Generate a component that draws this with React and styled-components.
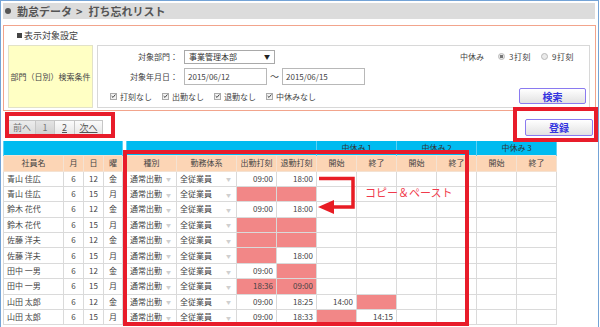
import React from 'react';
import styled, { createGlobalStyle } from 'styled-components';

const GlobalStyle = createGlobalStyle`
  html, body { margin: 0; padding: 0; background: #fff; }
  body {
    width: 600px; height: 327px; overflow: hidden;
    font-family: "Noto Sans CJK JP", "Noto Sans", sans-serif;
    color: #444;
  }
  * { box-sizing: border-box; }
`;

const Page = styled.div`
  position: relative;
  width: 599px;
  height: 327px;
  border: 1px solid #74a3d6;
  border-bottom: none;
  padding: 2px 2px 0 2px;
  overflow: hidden;
`;

const TitleBar = styled.div`
  display: flex;
  align-items: center;
  height: 16px;
  margin-right: 1px;
  padding-left: 2px;
  background: #dcdcdc;
  color: #555;
  font-size: 11px;
  font-weight: bold;
  white-space: pre;
`;

const Bullet = styled.span`
  width: 6px;
  height: 6px;
  border-radius: 50%;
  background: #555;
  margin-right: 6px;
`;

const Crumb = styled.span`
  margin: 0 6px 0 4px;
`;

const SearchPanel = styled.div`
  margin-top: 6px;
  height: 86px;
  border: 1px solid #f2a48c;
  padding: 0 5px 0 4px;
`;

const PanelHeading = styled.div`
  display: flex;
  align-items: center;
  height: 19px;
  padding-left: 9px;
  font-size: 9px;
  color: #444;
`;

const Square = styled.span`
  width: 5px;
  height: 5px;
  background: #444;
  margin-right: 2px;
`;

const ConditionBox = styled.div`
  display: flex;
  gap: 4px;
  height: 63px;
`;

const ConditionLabel = styled.div`
  width: 85px;
  display: flex;
  align-items: center;
  justify-content: center;
  background: #ffffc4;
  border: 1px solid #e2e2c8;
  font-size: 8px;
  color: #444;
`;

const ConditionFields = styled.div`
  flex: 1;
  border: 1px solid #d8d8d8;
  padding: 3px 3px 2px 0;
  display: flex;
  flex-direction: column;
`;

const FieldRow = styled.div`
  display: flex;
  align-items: center;
  height: ${p => p.$h}px;
  margin-top: ${p => p.$mt || 0}px;
  padding-left: ${p => p.$pl || 0}px;
  font-size: 8px;
`;

const FieldLabel = styled.div`
  width: 80px;
  text-align: right;
  margin-right: 6px;
  color: #444;
`;

const SelectBox = styled.div`
  width: 91px;
  height: 14px;
  border: 1px solid #a9a9a9;
  background: #fff;
  display: flex;
  align-items: center;
  justify-content: space-between;
  padding: 0 4px 0 4px;
  color: #333;
`;

const SelectCaret = styled.span`
  font-size: 6px;
  color: #222;
`;

const DateInput = styled.div`
  width: 83px;
  height: 17px;
  border: 1px solid #b8b8b8;
  display: flex;
  align-items: center;
  padding-left: 3px;
  font-size: 8px;
  color: #444;
`;

const Tilde = styled.span`
  margin: 0 3px 0 3px;
  font-size: 9px;
`;

const RadioGroup = styled.div`
  margin-left: auto;
  margin-right: 12px;
  display: flex;
  align-items: center;
  color: #444;
`;

const RadioTitle = styled.span`
  margin-right: 14px;
`;

const Radio = styled.span`
  width: 7px;
  height: 7px;
  border-radius: 50%;
  border: 1px solid #b8b8b8;
  background: ${p => (p.$on ? 'radial-gradient(circle, #777 0 1.6px, #e8e8e8 2px)' : '#eaeaea')};
  margin-right: 4px;
`;

const RadioText = styled.span`
  margin-right: ${p => p.$mr || 0}px;
  letter-spacing: 0.5px;
`;

const CheckItem = styled.span`
  display: flex;
  align-items: center;
  margin-right: 10px;
  color: #444;
`;

const CheckBox = styled.span`
  width: 7px;
  height: 7px;
  border: 1px solid #aaa;
  background: #f1f1f1;
  margin-right: 3px;
  display: flex;
  align-items: center;
  justify-content: center;
`;

const ActionButton = styled.button`
  margin-left: auto;
  margin-right: ${p => p.$mr}px;
  width: ${p => p.$w}px;
  height: ${p => p.$h}px;
  border: 1px solid #8a7af0;
  border-radius: 2px;
  background: linear-gradient(#ffffff, #e2e2e2);
  color: #3535e0;
  font-family: "Noto Sans CJK JP", sans-serif;
  font-size: 10px;
  font-weight: bold;
  padding: 0;
  display: flex;
  align-items: center;
  justify-content: center;
`;

const ToolRow = styled.div`
  display: flex;
  align-items: center;
  height: 17px;
  margin: 8px 0 5px 0;
  padding-left: 5px;
`;

const Pager = styled.div`
  display: flex;
  height: 16px;
`;

const PageBtn = styled.span`
  width: ${p => p.$w}px;
  height: 16px;
  display: flex;
  align-items: center;
  justify-content: center;
  border: 1px solid #c6c6c6;
  margin-left: -1px;
  font-size: 9px;
  color: ${p => (p.$link ? '#555' : '#777')};
  text-decoration: ${p => (p.$link ? 'underline' : 'none')};
  background: ${p =>
    p.$current ? 'linear-gradient(#e4e4e4, #cfcfcf)' : p.$link ? 'linear-gradient(#fbfbfb, #e6e6e6)' : 'linear-gradient(#ececec, #dadada)'};
  &:first-child { margin-left: 0; }
`;

const Tables = styled.div`
  display: flex;
  gap: 3px;
`;

const Grid = styled.table`
  border-collapse: collapse;
  table-layout: fixed;
  width: ${p => p.$w}px;
  font-size: 8px;
  line-height: 1;
`;

const BlueRow = styled.tr`
  height: 14px;
`;

const BlueCell = styled.th`
  background: #00bbf0;
  border-left: 1px solid #5cd0f5;
  border-right: 1px solid #5cd0f5;
  font-weight: normal;
  color: #333;
  padding: 0;
  vertical-align: middle;
`;

const HeadRow = styled.tr`
  height: 16px;
`;

const HeadCell = styled.th`
  background: #fcd5b5;
  border: 1px solid #f4e2d2;
  font-weight: normal;
  color: #444;
  padding: 0;
  text-align: center;
  vertical-align: middle;
`;

const DataRow = styled.tr`
  height: 15.4px;
`;

const Cell = styled.td`
  border: 1px solid #dadada;
  padding: 0 ${p => (p.$align === 'right' ? 3 : 0)}px 0 ${p => (p.$align === 'left' ? 3 : 0)}px;
  text-align: ${p => p.$align || 'center'};
  vertical-align: middle;
  background: ${p => (p.$pink ? '#f28787' : '#fff')};
  color: #444;
  white-space: nowrap;
  overflow: hidden;
`;

const Combo = styled.span`
  display: flex;
  justify-content: space-between;
  align-items: center;
  padding-right: 5px;
`;

const ComboCaret = styled.span`
  font-size: 5px;
  color: #cfcfcf;
`;

const RedBox = styled.div`
  position: absolute;
  left: ${p => p.$x}px;
  top: ${p => p.$y}px;
  width: ${p => p.$w}px;
  height: ${p => p.$h}px;
  border: 4px solid #e81c2a;
  pointer-events: none;
`;

const ArrowSvg = styled.svg`
  position: absolute;
  left: 309px;
  top: 169px;
`;

const NoteText = styled.div`
  position: absolute;
  left: 364px;
  top: 183px;
  font-size: 11px;
  color: #f03a4c;
  white-space: nowrap;
`;

const P = { pink: true };
const rows = [
  { name: '青山 佳広', d: 12, w: '金', cin: { t: '09:00' }, cout: { t: '18:00' } },
  { name: '青山 佳広', d: 15, w: '月', cin: P, cout: P },
  { name: '鈴木 花代', d: 12, w: '金', cin: { t: '09:00' }, cout: { t: '18:00' } },
  { name: '鈴木 花代', d: 15, w: '月', cin: P, cout: P },
  { name: '佐藤 洋夫', d: 12, w: '金', cin: P, cout: P },
  { name: '佐藤 洋夫', d: 15, w: '月', cin: P, cout: { t: '18:00' } },
  { name: '田中 一男', d: 12, w: '金', cin: { t: '09:00' }, cout: P },
  { name: '田中 一男', d: 15, w: '月', cin: { pink: true, t: '18:36' }, cout: { pink: true, t: '09:00' } },
  { name: '山田 太郎', d: 12, w: '金', cin: { t: '09:00' }, cout: { t: '18:25' }, b1s: { t: '14:00' }, b1e: P },
  { name: '山田 太郎', d: 15, w: '月', cin: { t: '09:00' }, cout: { t: '18:33' }, b1s: P, b1e: { t: '14:15' } },
];

const TimeCell = ({ v }) => (
  <Cell $align="right" $pink={v && v.pink}>{v && v.t}</Cell>
);

const Check = () => (
  <CheckBox>
    <svg width="6" height="6" viewBox="0 0 6 6">
      <path d="M0.8 3.1 L2.4 4.7 L5.3 1.2" fill="none" stroke="#333" strokeWidth="1.1" />
    </svg>
  </CheckBox>
);

export default function App() {
  return (
    <>
      <GlobalStyle />
      <Page>
        <TitleBar>
          <Bullet />
          勤怠データ
          <Crumb>&gt;</Crumb>
          打ち忘れリスト
        </TitleBar>

        <SearchPanel>
          <PanelHeading>
            <Square />
            表示対象設定
          </PanelHeading>
          <ConditionBox>
            <ConditionLabel>部門（日別）検索条件</ConditionLabel>
            <ConditionFields>
              <FieldRow $h={15}>
                <FieldLabel>対象部門：</FieldLabel>
                <SelectBox>
                  事業管理本部
                  <SelectCaret>▼</SelectCaret>
                </SelectBox>
                <RadioGroup>
                  <RadioTitle>中休み</RadioTitle>
                  <Radio $on />
                  <RadioText $mr={10}>3打刻</RadioText>
                  <Radio />
                  <RadioText>9打刻</RadioText>
                </RadioGroup>
              </FieldRow>
              <FieldRow $h={17} $mt={4}>
                <FieldLabel>対象年月日：</FieldLabel>
                <DateInput>2015/06/12</DateInput>
                <Tilde>～</Tilde>
                <DateInput>2015/06/15</DateInput>
              </FieldRow>
              <FieldRow $h={16} $mt={3} $pl={12}>
                <CheckItem><Check />打刻なし</CheckItem>
                <CheckItem><Check />出勤なし</CheckItem>
                <CheckItem><Check />退勤なし</CheckItem>
                <CheckItem><Check />中休みなし</CheckItem>
                <ActionButton $w={67} $h={16} $mr={0}>検索</ActionButton>
              </FieldRow>
            </ConditionFields>
          </ConditionBox>
        </SearchPanel>

        <ToolRow>
          <Pager>
            <PageBtn $w={28}>前へ</PageBtn>
            <PageBtn $w={20} $current>1</PageBtn>
            <PageBtn $w={21} $link>2</PageBtn>
            <PageBtn $w={29} $link>次へ</PageBtn>
          </Pager>
          <ActionButton $w={68} $h={17} $mr={3}>登録</ActionButton>
        </ToolRow>

        <Tables>
          <Grid $w={119}>
            <colgroup>
              <col style={{ width: 60 }} />
              <col style={{ width: 20 }} />
              <col style={{ width: 20 }} />
              <col style={{ width: 19 }} />
            </colgroup>
            <thead>
              <BlueRow><BlueCell colSpan={4} /></BlueRow>
              <HeadRow>
                <HeadCell>社員名</HeadCell>
                <HeadCell>月</HeadCell>
                <HeadCell>日</HeadCell>
                <HeadCell>曜</HeadCell>
              </HeadRow>
            </thead>
            <tbody>
              {rows.map((r, i) => (
                <DataRow key={i}>
                  <Cell $align="left">{r.name}</Cell>
                  <Cell>6</Cell>
                  <Cell>{r.d}</Cell>
                  <Cell>{r.w}</Cell>
                </DataRow>
              ))}
            </tbody>
          </Grid>

          <Grid $w={430}>
            <colgroup>
              <col style={{ width: 50 }} />
              <col style={{ width: 60 }} />
              {Array.from({ length: 8 }).map((_, i) => (
                <col key={i} style={{ width: 40 }} />
              ))}
            </colgroup>
            <thead>
              <BlueRow>
                <BlueCell colSpan={4} />
                <BlueCell colSpan={2}>中休み 1</BlueCell>
                <BlueCell colSpan={2}>中休み 2</BlueCell>
                <BlueCell colSpan={2}>中休み 3</BlueCell>
              </BlueRow>
              <HeadRow>
                <HeadCell>種別</HeadCell>
                <HeadCell>勤務体系</HeadCell>
                <HeadCell>出勤打刻</HeadCell>
                <HeadCell>退勤打刻</HeadCell>
                <HeadCell>開始</HeadCell>
                <HeadCell>終了</HeadCell>
                <HeadCell>開始</HeadCell>
                <HeadCell>終了</HeadCell>
                <HeadCell>開始</HeadCell>
                <HeadCell>終了</HeadCell>
              </HeadRow>
            </thead>
            <tbody>
              {rows.map((r, i) => (
                <DataRow key={i}>
                  <Cell $align="left">
                    <Combo>通常出勤<ComboCaret>▼</ComboCaret></Combo>
                  </Cell>
                  <Cell $align="left">
                    <Combo>全従業員<ComboCaret>▼</ComboCaret></Combo>
                  </Cell>
                  <TimeCell v={r.cin} />
                  <TimeCell v={r.cout} />
                  <TimeCell v={r.b1s} />
                  <TimeCell v={r.b1e} />
                  <TimeCell />
                  <TimeCell />
                  <TimeCell />
                  <TimeCell />
                </DataRow>
              ))}
            </tbody>
          </Grid>
        </Tables>

        <RedBox $x={4} $y={111} $w={110} $h={26} />
        <RedBox $x={512} $y={106} $w={85} $h={35} />
        <RedBox $x={122} $y={149} $w={346} $h={176} />

        <ArrowSvg width="52" height="50" viewBox="0 0 52 50">
          <path d="M9 8.5 H43 V37 H22" fill="none" stroke="#e81c24" strokeWidth="3.5" />
          <polygon points="8,37 24,30 24,44" fill="#e81c24" />
        </ArrowSvg>
        <NoteText>コピー＆ペースト</NoteText>
      </Page>
    </>
  );
}
